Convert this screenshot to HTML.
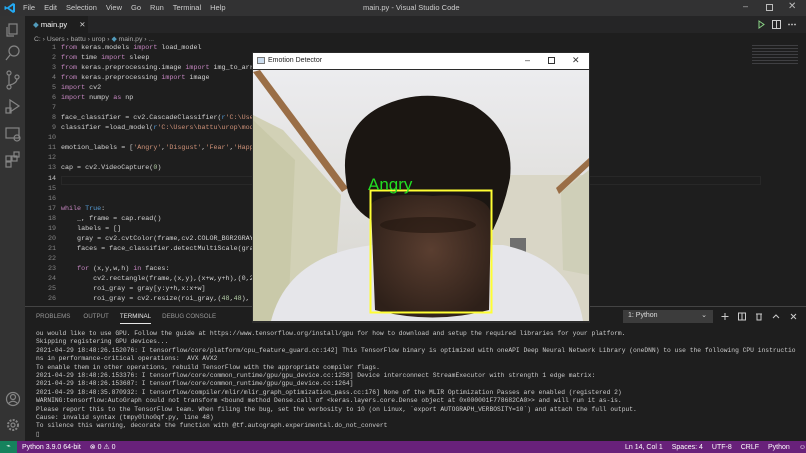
<!DOCTYPE html>
<html><head><style>
*{margin:0;padding:0;box-sizing:border-box}
body{width:806px;height:453px;overflow:hidden;background:#1e1e1e;position:relative;font-family:"Liberation Sans",sans-serif}
.abs{position:absolute}
.code{position:absolute;left:0;top:44px;font-family:"Liberation Mono",monospace;font-size:6.7px;color:#d4d4d4;white-space:pre}
.ln{position:absolute;left:30px;width:26px;text-align:right;color:#858585}
.tx{position:absolute;left:61px}
.k{color:#c586c0}.s{color:#ce9178}.b{color:#569cd6}.n{color:#b5cea8}
.term{position:absolute;left:36px;top:330px;font-family:"Liberation Mono",monospace;font-size:6.3px;line-height:8.4px;color:#cccccc;white-space:pre}
.menu span{margin-right:9px}
</style></head><body>
<div class="abs" style="left:0;top:0;width:806px;height:16px;background:#323233"></div>
<svg class="abs" style="left:4px;top:2px" width="12" height="12" viewBox="0 0 12 12"><path d="M9 1 L11 2 V10 L9 11 L3 6.5 L1 8 L0.5 7.5 V4.5 L1 4 L3 5.5 Z M9 3.5 L5 6 L9 8.5 Z" fill="#23a9f2"/></svg>
<div class="abs menu" style="left:23px;top:3px;font-size:7.5px;color:#ccc;white-space:nowrap"><span>File</span><span>Edit</span><span>Selection</span><span>View</span><span>Go</span><span>Run</span><span>Terminal</span><span>Help</span></div>
<div class="abs" style="left:363px;top:3px;font-size:7.5px;color:#ccc">main.py - Visual Studio Code</div>
<div class="abs" style="left:743px;top:1px;font-size:9px;color:#bbb">–</div>
<div class="abs" style="left:766px;top:4px;width:7px;height:7px;border:1px solid #bbb"></div>
<div class="abs" style="left:788px;top:1px;font-size:10px;color:#bbb">✕</div>
<div class="abs" style="left:0;top:16px;width:25px;height:425px;background:#333333"></div>
<svg class="abs" style="left:4px;top:20px" width="18" height="160" viewBox="0 0 18 160" fill="none" stroke="#858585" stroke-width="1.2">
<rect x="5" y="4" width="8" height="10"/><path d="M3 7 V16 H10"/>
<circle cx="10" cy="31" r="5"/><path d="M6 35 L2 40"/>
<circle cx="5" cy="53" r="2"/><circle cx="5" cy="67" r="2"/><circle cx="13" cy="57" r="2"/><path d="M5 55 V65 M13 59 Q13 63 6 65"/>
<path d="M6 80 L15 86 L6 92 Z"/><rect x="2" y="88" width="5" height="5"/>
<rect x="2" y="108" width="13" height="10"/><circle cx="13" cy="118" r="3"/>
<rect x="2" y="136" width="5" height="5"/><rect x="8" y="136" width="5" height="5"/><rect x="2" y="142" width="5" height="5"/><rect x="10" y="132" width="5" height="5"/>
</svg>
<svg class="abs" style="left:4px;top:390px" width="18" height="45" viewBox="0 0 18 45" fill="none" stroke="#858585" stroke-width="1.2"><circle cx="9" cy="9" r="6.5"/><circle cx="9" cy="7" r="2.5"/><path d="M4.5 13.5 Q9 9 13.5 13.5"/><circle cx="9" cy="35" r="5" stroke-dasharray="2 1.3" stroke-width="2"/><circle cx="9" cy="35" r="2"/></svg>
<div class="abs" style="left:25px;top:16px;width:781px;height:17px;background:#252526"></div>
<div class="abs" style="left:25px;top:16px;width:63px;height:17px;background:#1e1e1e;font-size:7.5px;color:#fff;padding:4px 0 0 8px"><span style="color:#519aba">◆</span> main.py <span style="margin-left:10px;color:#ccc">✕</span></div>
<svg class="abs" style="left:753px;top:19px" width="50" height="11" viewBox="0 0 50 11" fill="none" stroke="#ccc"><path d="M6 2 L11 5.5 L6 9 Z" stroke="#89d185"/><rect x="19.5" y="1.5" width="8" height="8"/><path d="M23.5 1.5 V9.5"/><circle cx="36" cy="5.5" r=".4"/><circle cx="39" cy="5.5" r=".4"/><circle cx="42" cy="5.5" r=".4"/></svg>
<div class="abs" style="left:34px;top:35px;font-size:6.8px;color:#a9a9a9;white-space:nowrap">C: › Users › battu › urop › <span style="color:#519aba">◆</span> main.py › ...</div>
<div class="abs" style="left:752px;top:45px;width:46px;height:20px;background:repeating-linear-gradient(#55555a 0 1px,transparent 1px 3px);opacity:.6"></div>
<div class="abs" style="left:61px;top:176px;width:700px;height:9px;border:1px solid #282828"></div>
<div class="code">
<div class="ln" style="top:0">1</div><div class="tx" style="top:0"><span class="k">from</span> keras.models <span class="k">import</span> load_model</div>
<div class="ln" style="top:10px">2</div><div class="tx" style="top:10px"><span class="k">from</span> time <span class="k">import</span> sleep</div>
<div class="ln" style="top:20px">3</div><div class="tx" style="top:20px"><span class="k">from</span> keras.preprocessing.image <span class="k">import</span> img_to_array</div>
<div class="ln" style="top:30px">4</div><div class="tx" style="top:30px"><span class="k">from</span> keras.preprocessing <span class="k">import</span> image</div>
<div class="ln" style="top:40px">5</div><div class="tx" style="top:40px"><span class="k">import</span> cv2</div>
<div class="ln" style="top:50px">6</div><div class="tx" style="top:50px"><span class="k">import</span> numpy <span class="k">as</span> np</div>
<div class="ln" style="top:60px">7</div>
<div class="ln" style="top:70px">8</div><div class="tx" style="top:70px">face_classifier = cv2.CascadeClassifier(<span class="b">r</span><span class="s">'C:\Users</span></div>
<div class="ln" style="top:80px">9</div><div class="tx" style="top:80px">classifier =load_model(<span class="b">r</span><span class="s">'C:\Users\battu\urop\model</span></div>
<div class="ln" style="top:90px">10</div>
<div class="ln" style="top:100px">11</div><div class="tx" style="top:100px">emotion_labels = [<span class="s">'Angry'</span>,<span class="s">'Disgust'</span>,<span class="s">'Fear'</span>,<span class="s">'Happy'</span></div>
<div class="ln" style="top:110px">12</div>
<div class="ln" style="top:120px">13</div><div class="tx" style="top:120px">cap = cv2.VideoCapture(<span class="n">0</span>)</div>
<div class="ln" style="top:131px;color:#c6c6c6">14</div>
<div class="ln" style="top:141px">15</div>
<div class="ln" style="top:151px">16</div>
<div class="ln" style="top:161px">17</div><div class="tx" style="top:161px"><span class="k">while</span> <span class="b">True</span>:</div>
<div class="ln" style="top:171px">18</div><div class="tx" style="top:171px">    _, frame = cap.read()</div>
<div class="ln" style="top:181px">19</div><div class="tx" style="top:181px">    labels = []</div>
<div class="ln" style="top:191px">20</div><div class="tx" style="top:191px">    gray = cv2.cvtColor(frame,cv2.COLOR_BGR2GRAY)</div>
<div class="ln" style="top:201px">21</div><div class="tx" style="top:201px">    faces = face_classifier.detectMultiScale(gray</div>
<div class="ln" style="top:211px">22</div>
<div class="ln" style="top:221px">23</div><div class="tx" style="top:221px">    <span class="k">for</span> (x,y,w,h) <span class="k">in</span> faces:</div>
<div class="ln" style="top:231px">24</div><div class="tx" style="top:231px">        cv2.rectangle(frame,(x,y),(x+w,y+h),(0,2</div>
<div class="ln" style="top:241px">25</div><div class="tx" style="top:241px">        roi_gray = gray[y:y+h,x:x+w]</div>
<div class="ln" style="top:251px">26</div><div class="tx" style="top:251px">        roi_gray = cv2.resize(roi_gray,(<span class="n">48</span>,<span class="n">48</span>),</div>
</div>
<div class="abs" style="left:25px;top:306px;width:781px;height:1px;background:#444"></div>
<div class="abs" style="left:36px;top:313px;font-size:6.2px;color:#999;white-space:nowrap">PROBLEMS<span style="margin-left:13px">OUTPUT</span><span style="margin-left:11px;color:#e7e7e7;border-bottom:1px solid #e7e7e7;padding-bottom:3px">TERMINAL</span><span style="margin-left:11px">DEBUG CONSOLE</span></div>
<div class="abs" style="left:623px;top:310px;width:90px;height:13px;background:#3c3c3c;font-size:7px;color:#ddd;padding:2px 0 0 5px">1: Python<span style="position:absolute;right:6px;top:1px">⌄</span></div>
<svg class="abs" style="left:718px;top:310px" width="80" height="13" viewBox="0 0 80 13" fill="none" stroke="#ccc" stroke-width="1"><path d="M7 3 V10 M3.5 6.5 H10.5"/><rect x="20.5" y="3" width="7" height="7"/><path d="M24 3 V10"/><path d="M38 4 H44 M39 4 V10 H43 V4"/><path d="M55 8 L58 5 L61 8"/><path d="M73 4 L78 9 M78 4 L73 9"/></svg>
<div class="term">ou would like to use GPU. Follow the guide at https://www.tensorflow.org/install/gpu for how to download and setup the required libraries for your platform.
Skipping registering GPU devices...
2021-04-29 18:48:26.152076: I tensorflow/core/platform/cpu_feature_guard.cc:142] This TensorFlow binary is optimized with oneAPI Deep Neural Network Library (oneDNN) to use the following CPU instructio
ns in performance-critical operations:  AVX AVX2
To enable them in other operations, rebuild TensorFlow with the appropriate compiler flags.
2021-04-29 18:48:26.153376: I tensorflow/core/common_runtime/gpu/gpu_device.cc:1258] Device interconnect StreamExecutor with strength 1 edge matrix:
2021-04-29 18:48:26.153687: I tensorflow/core/common_runtime/gpu/gpu_device.cc:1264]
2021-04-29 18:48:35.870932: I tensorflow/compiler/mlir/mlir_graph_optimization_pass.cc:176] None of the MLIR Optimization Passes are enabled (registered 2)
WARNING:tensorflow:AutoGraph could not transform &lt;bound method Dense.call of &lt;keras.layers.core.Dense object at 0x000001F778682CA0&gt;&gt; and will run it as-is.
Please report this to the TensorFlow team. When filing the bug, set the verbosity to 10 (on Linux, `export AUTOGRAPH_VERBOSITY=10`) and attach the full output.
Cause: invalid syntax (tmpy0lho0qf.py, line 48)
To silence this warning, decorate the function with @tf.autograph.experimental.do_not_convert
▯</div>
<div class="abs" style="left:0;top:441px;width:806px;height:12px;background:#68217a"></div>
<div class="abs" style="left:0;top:441px;width:17px;height:12px;background:#16825d;color:#fff;font-size:7px;text-align:center;line-height:12px">⌁</div>
<div class="abs" style="left:22px;top:443px;font-size:7px;color:#fff;white-space:nowrap">Python 3.9.0 64-bit<span style="margin-left:9px">⊗ 0 ⚠ 0</span></div>
<div class="abs" style="left:625px;top:443px;font-size:7px;color:#fff;white-space:nowrap">Ln 14, Col 1<span style="margin-left:9px">Spaces: 4</span><span style="margin-left:9px">UTF-8</span><span style="margin-left:9px">CRLF</span><span style="margin-left:9px">Python</span><span style="margin-left:9px">☺</span><span style="margin-left:9px">🔔︎</span></div>
<div class="abs" style="left:252px;top:52px;width:338px;height:271px;background:#2b2b2b"></div>
<div class="abs" style="left:253px;top:53px;width:336px;height:16px;background:#fff;font-size:7px;color:#222;padding:4px 0 0 15px">Emotion Detector</div>
<div class="abs" style="left:257px;top:57px;width:8px;height:7px;border:1px solid #777;background:#cde"></div>
<div class="abs" style="left:525px;top:55px;font-size:9px;color:#333">–</div>
<div class="abs" style="left:548px;top:57px;width:7px;height:7px;border:1px solid #333"></div>
<div class="abs" style="left:572px;top:55px;font-size:9px;color:#333">✕</div>
<svg class="abs" style="left:253px;top:70px" width="336" height="251" viewBox="0 0 336 251">
<defs>
<linearGradient id="w" x1="0" y1="0" x2="0" y2="1"><stop offset="0" stop-color="#ececef"/><stop offset="1" stop-color="#d6d4cc"/></linearGradient>
<radialGradient id="f" cx=".5" cy=".45" r=".6"><stop offset="0" stop-color="#5a3e30"/><stop offset="1" stop-color="#2e2019"/></radialGradient>
</defs>
<rect width="336" height="251" fill="url(#w)"/>
<rect x="200" y="105" width="136" height="146" fill="#d9d6c6"/>
<polygon points="0,45 0,251 70,251 82,210 88,125 30,60" fill="#d2d1b6"/>
<polygon points="0,50 0,251 35,251 42,90" fill="#c4c6a4" opacity=".7"/>
<polygon points="0,2 7,0 95,118 89,122" fill="#9a6e46"/>
<polygon points="308,122 336,100 336,205 310,200" fill="#cfcfb8"/>
<polygon points="303,118 336,88 336,96 306,124" fill="#9a6e46"/>
<rect x="257" y="168" width="16" height="18" fill="#6f6f6f"/>
<path d="M18 251 Q35 185 120 175 L250 175 Q320 190 330 251 Z" fill="#e6e6ea"/>
<path d="M93 110 Q86 60 125 38 Q170 15 220 35 Q262 60 257 108 Q252 135 240 160 L118 150 Q94 135 93 110 Z" fill="#1b1612"/>
<path d="M118 135 Q125 122 180 126 Q236 122 238 145 L236 240 Q180 255 122 240 Z" fill="url(#f)"/>
<ellipse cx="175" cy="155" rx="48" ry="8" fill="#22160f" opacity=".6"/>
<rect x="117.5" y="120.5" width="121" height="122" fill="none" stroke="#ffff33" stroke-width="2"/>
<text x="115" y="120" font-family="Liberation Sans,sans-serif" font-size="17" fill="#22dd22">Angry</text>
</svg>
</body></html>
